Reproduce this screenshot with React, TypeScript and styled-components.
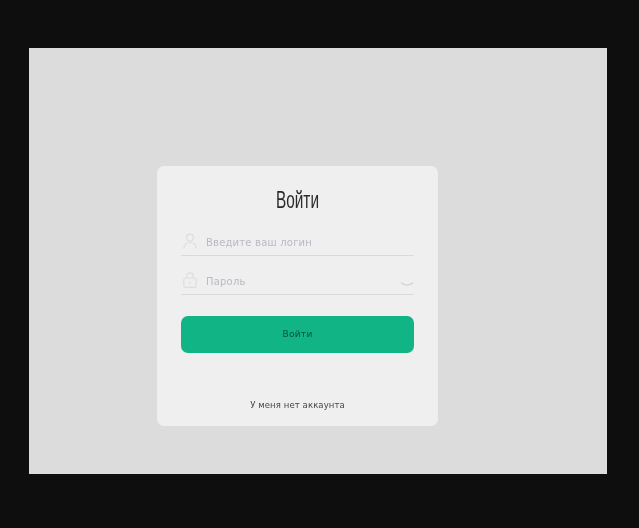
import styled, { createGlobalStyle } from "styled-components";

const GlobalStyle = createGlobalStyle`
  html, body {
    margin: 0;
    height: 100%;
    background: #0e0e0e;
  }
  body {
    font-family: "DejaVu Sans", "Liberation Sans", sans-serif;
  }
`;

const Page = styled.div`
  width: 639px;
  height: 528px;
  box-sizing: border-box;
  padding: 48px 0 0 29px;
  overflow: hidden;
`;

const Screen = styled.main`
  width: 578px;
  height: 426px;
  box-sizing: border-box;
  padding: 118px 0 0 128px;
  background: #dcdcdc;
`;

const Card = styled.form`
  width: 281px;
  height: 260px;
  box-sizing: border-box;
  padding: 21px 24px 0;
  display: flex;
  flex-direction: column;
  background: #efefef;
  border-radius: 7px;
  filter: blur(0.7px);
`;

const Title = styled.h1`
  margin: 0 0 20px;
  height: 26px;
  font-family: "Liberation Sans Narrow", "Liberation Sans", sans-serif;
  font-size: 24px;
  line-height: 26px;
  font-weight: 400;
  text-align: center;
  color: #2a2a2a;
  transform: scaleX(0.64);
`;

const Field = styled.label`
  box-sizing: border-box;
  height: 23px;
  margin-bottom: 16px;
  padding: 0 0 4px 2px;
  display: flex;
  align-items: center;
  gap: 9px;
  border-bottom: 1px solid #dadada;
`;

const FieldIcon = styled.svg`
  width: 14px;
  height: 16px;
  margin-top: -2px;
  flex: none;
  fill: none;
  stroke: #dcdede;
  stroke-width: 1.2;
`;

const Placeholder = styled.span`
  flex: 1;
  font-size: 10px;
  letter-spacing: 0.2px;
  color: #b8bac4;
`;

const EyeIcon = styled.svg`
  width: 14px;
  height: 6px;
  margin-top: 5px;
  flex: none;
  fill: none;
  stroke: #d2d4d4;
  stroke-width: 1.2;
`;

const Submit = styled.button`
  height: 37px;
  margin-top: 5px;
  padding: 0 0 2px;
  border: 0;
  border-radius: 7px;
  background: #11b585;
  font-family: inherit;
  font-size: 9px;
  font-weight: 400;
  letter-spacing: 0.3px;
  color: #08503c;
`;

const Footer = styled.a`
  margin-top: 46px;
  font-size: 8.5px;
  line-height: 12px;
  letter-spacing: 0.1px;
  text-align: center;
  color: #45464a;
`;

export default function App() {
  return (
    <>
      <GlobalStyle />
      <Page>
        <Screen>
          <Card>
            <Title>Войти</Title>
            <Field>
              <FieldIcon viewBox="0 0 14 16">
                <circle cx="7" cy="4.6" r="3.5" />
                <path d="M1 15.5c0-4 2.4-6 6-6s6 2 6 6" />
              </FieldIcon>
              <Placeholder>Введите ваш логин</Placeholder>
            </Field>
            <Field>
              <FieldIcon viewBox="0 0 14 16">
                <rect x="0.8" y="6" width="12.4" height="9.4" rx="2" />
                <path d="M3.8 6V4a3.2 3.2 0 0 1 6.4 0v2" />
                <path d="M7 9.5v2.5" />
              </FieldIcon>
              <Placeholder>Пароль</Placeholder>
              <EyeIcon viewBox="0 0 14 6">
                <path d="M1 1.5c3 3.5 9 3.5 12 0" />
              </EyeIcon>
            </Field>
            <Submit type="button">Войти</Submit>
            <Footer>У меня нет аккаунта</Footer>
          </Card>
        </Screen>
      </Page>
    </>
  );
}
